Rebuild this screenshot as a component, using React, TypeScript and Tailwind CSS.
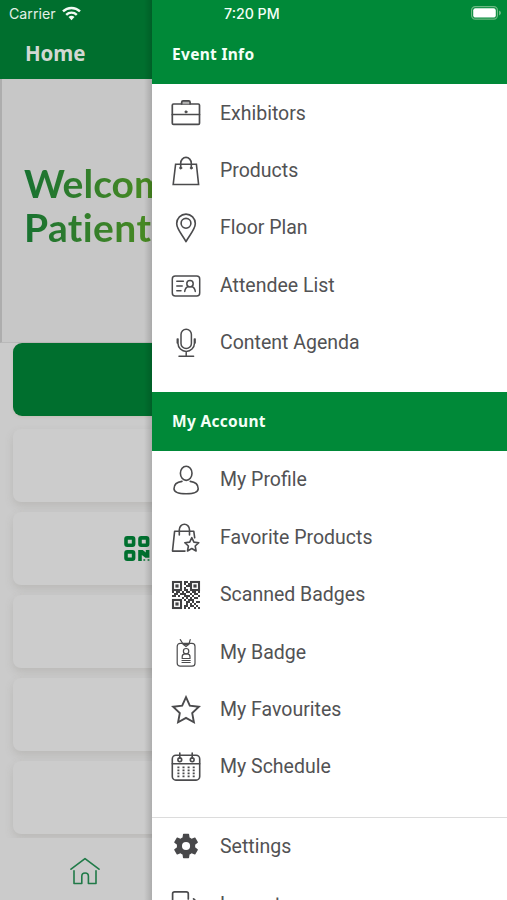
import { ReactNode } from "react";

interface MenuItemProps {
  icon: ReactNode;
  label: string;
}

interface IconProps {
  children: ReactNode;
  width?: number;
}

// Every drawer icon is drawn on a 30x30 grid
const Icon = ({ children, width = 1.6 }: IconProps) => (
  <svg
    width="30"
    height="30"
    viewBox="0 0 30 30"
    fill="none"
    stroke="#4b4b4d"
    strokeWidth={width}
    strokeLinecap="round"
    strokeLinejoin="round"
    className="shrink-0"
  >
    {children}
  </svg>
);

const BriefcaseIcon = () => (
  <Icon width={1.7}>
    <rect x="1.3" y="5" width="27.2" height="20.4" rx="1.2" />
    <path d="M1.3 15.5h27.2" />
    <path d="M10.7 4.8V3.2q0-1.4 1.4-1.4h5.6q1.4 0 1.4 1.4v1.6" fill="#b5b5b5" />
    <circle cx="15" cy="12.9" r="1.1" fill="#4b4b4d" strokeWidth="0.8" />
  </Icon>
);

const BagIcon = () => (
  <Icon>
    <path d="M4.6 8.2h20.8l2.2 20.3H2.2z" strokeLinejoin="miter" />
    <path d="M9.7 12V7.2a5.3 5.8 0 0 1 10.6 0V12" />
    <circle cx="9.7" cy="12" r="1.1" fill="#4b4b4d" strokeWidth="0.8" />
    <circle cx="20.3" cy="12" r="1.1" fill="#4b4b4d" strokeWidth="0.8" />
  </Icon>
);

const PinIcon = () => (
  <Icon>
    <path d="M15 28.7C12 22.5 5.7 16.5 5.7 10.5a9.3 9.4 0 0 1 18.6 0C24.3 16.5 18 22.5 15 28.7z" />
    <circle cx="15" cy="10.3" r="4.9" />
  </Icon>
);

const IdCardIcon = () => (
  <Icon width={1.5}>
    <rect x="1.3" y="4.9" width="27.4" height="20" rx="3" />
    <path d="M5.8 10.3h6.6M5.8 15h5.4M5.8 19.7h4.2" />
    <circle cx="19" cy="12.8" r="3.2" />
    <path d="M13.7 20.4c.4-3 2-4.6 3.8-5M24.3 20.4c-.4-3-2-4.6-3.8-5" />
  </Icon>
);

const MicIcon = () => (
  <Icon width={1.5}>
    <rect x="10" y="1.2" width="10.4" height="19.4" rx="5.2" />
    <path d="M7 11v4.4a8.2 8 0 0 0 16.4 0V11M6.3 11v4M24.1 11v4M15.2 23.4v4.9M8 28.3h14.6" />
  </Icon>
);

const ProfileIcon = () => (
  <Icon>
    <ellipse cx="15.2" cy="8.3" rx="5.8" ry="7.1" />
    <path d="M11 16.4C6 17 3 19.7 3 23.7c0 3.5 4.8 5 12.1 5s12.1-1.5 12.1-5c0-4-3-6.7-8-7.3" />
  </Icon>
);

const FavoriteProductsIcon = () => (
  <Icon>
    <path d="M14 28.1H1.5L3.6 8.3h19.2l.9 6.5" />
    <path d="M8.3 12V6.8a5.1 5.6 0 0 1 10.2 0V12" />
    <path
      d="m20.8 14.6 2.1 4.5 4.9.6-3.6 3.3.9 5-4.3-2.5-4.3 2.5.9-5-3.6-3.3 4.9-.6z"
      fill="#fff"
    />
  </Icon>
);

const QR_ROWS = [
  "00000011000000",
  "00000010100000",
  "00000001100000",
  "00000010000000",
  "00000011010000",
  "10110101101101",
  "01101110010110",
  "11010011101001",
  "00000101010110",
  "00000010111000",
  "00000001101011",
  "00000001010100",
  "00000011011010",
  "00000010100101",
];

const QrIcon = () => (
  <Icon width={2.1}>
    <g fill="#414143" stroke="none">
      {QR_ROWS.map((row, y) =>
        row.split("").map((cell, x) =>
          cell === "1" ? <rect key={`${x}-${y}`} x={1 + x * 2} y={1 + y * 2} width="2" height="2" /> : null
        )
      )}
    </g>
    {[[1, 1], [19, 1], [1, 19]].map(([x, y]) => (
      <g key={`${x}-${y}`} stroke="#414143" strokeLinejoin="miter">
        <rect x={x + 1} y={y + 1} width="8" height="8" />
        <rect x={x + 3.4} y={y + 3.4} width="3.2" height="3.2" fill="#414143" stroke="none" />
      </g>
    ))}
  </Icon>
);

const BadgeIcon = () => (
  <Icon width={1.2}>
    <rect x="6.2" y="5.4" width="17.8" height="22.8" rx="3" />
    <path d="M9.3 1.6 12 6l3 2.6L18 6l1.2-4.4M12.2 6.6h5.6" />
    <circle cx="15.1" cy="13.2" r="2.7" />
    <path d="M11.2 20.5v-1.8c0-1.5 1.4-2.6 2.6-2.8h2.6c1.4.2 2.6 1.3 2.6 2.8v1.8z" />
    <path d="M11 22.5h8.2M11 24.5h8.2" />
  </Icon>
);

const StarIcon = () => (
  <Icon width={1.9}>
    <path d="m15 2.2 3.8 8.4 9.1 1.1-6.7 6.4 1.7 9.2-7.9-4.4-7.9 4.4 1.7-9.2-6.7-6.4 9.1-1.1z" strokeLinejoin="miter" />
  </Icon>
);

const CalendarIcon = () => (
  <Icon>
    <rect x="1.3" y="3.3" width="27.4" height="24.8" rx="3.6" />
    <path d="M1.3 11.8h27.4M8.8 1v5.2M21.2 1v5.2" />
    <circle cx="8.8" cy="7.8" r="1.9" />
    <circle cx="21.2" cy="7.8" r="1.9" />
    {[15.4, 18.4, 21.4, 24.4].map((y) => (
      <path key={y} d={`M6.4 ${y}h17.5`} strokeLinecap="butt" strokeDasharray="2 3.1" strokeWidth="1.7" />
    ))}
  </Icon>
);

const SettingsIcon = () => (
  <Icon>
    <g transform="translate(-.2 -1.2) scale(1.27)" fill="#48484a" stroke="none">
      <path d="M19.14 12.94c.04-.3.06-.61.06-.94 0-.32-.02-.64-.07-.94l2.03-1.58a.49.49 0 0 0 .12-.61l-1.92-3.32a.49.49 0 0 0-.59-.22l-2.39.96c-.5-.38-1.03-.7-1.62-.94l-.36-2.54a.48.48 0 0 0-.48-.41h-3.84a.48.48 0 0 0-.47.41l-.36 2.54c-.59.24-1.13.57-1.62.94l-2.39-.96a.48.48 0 0 0-.59.22L2.74 8.87a.48.48 0 0 0 .12.61l2.03 1.58c-.05.3-.09.63-.09.94s.02.64.07.94l-2.03 1.58a.49.49 0 0 0-.12.61l1.92 3.32c.12.22.37.29.59.22l2.39-.96c.5.38 1.03.7 1.62.94l.36 2.54c.05.24.24.41.48.41h3.84c.24 0 .44-.17.47-.41l.36-2.54c.59-.24 1.13-.56 1.62-.94l2.39.96c.22.08.47 0 .59-.22l1.92-3.32a.48.48 0 0 0-.12-.61zM12 15.2a3.2 3.2 0 1 1 0-6.4 3.2 3.2 0 0 1 0 6.4z" />
    </g>
  </Icon>
);

const LogoutIcon = () => (
  <Icon width={1.7}>
    <path d="M17.3 9V3.8q0-2-2-2H3.6q-2 0-2 2v20q0 2 2 2h11.7q2 0 2-2V20" />
    <path d="m22.6 8.9 5.2 5-5.2 5M11 13.9h16.6" />
  </Icon>
);

const WifiIcon = () => (
  <svg width="19" height="15" viewBox="0 0 19 15" fill="none" stroke="#f2faf4" strokeWidth="2.4">
    <path d="M1 5.4a12.2 12.2 0 0 1 17 0" />
    <path d="M4.2 8.8a7.6 7.6 0 0 1 10.6 0" />
    <path d="m9.5 14.2-3-3.1a4.3 4.3 0 0 1 6 0z" fill="#f2faf4" stroke="none" />
  </svg>
);

const BatteryIcon = () => (
  <svg width="30" height="14" viewBox="0 0 30 14">
    <rect x=".6" y=".6" width="25.8" height="12.6" rx="3.6" fill="none" stroke="#6cb983" strokeWidth="1.2" />
    <rect x="2.2" y="2.2" width="22.6" height="9.4" rx="2.2" fill="#fff" />
    <path d="M28 4.6q2 .9 2 2.4t-2 2.4z" fill="#6cb983" />
  </svg>
);

const ScanIcon = () => (
  <svg width="27" height="26" viewBox="0 0 27 26" fill="none" stroke="#00702f" strokeWidth="3.6">
    <rect x="2" y="1.9" width="7.6" height="7.4" rx="1.2" />
    <rect x="16" y="1.9" width="7.6" height="7.4" rx="1.2" />
    <rect x="2" y="15.9" width="7.6" height="7.4" rx="1.2" />
    <path d="M14.2 25V14.1h4.6l3 2.4v-2.4h3.6v7.6h-4l-3.6-2.6V25z" fill="#00702f" stroke="none" />
    <path d="M19.4 23.2h1.8v1.6h-1.8zM23.6 23.2h1.8v1.6h-1.8z" fill="#00702f" stroke="none" />
  </svg>
);

const HomeIcon = () => (
  <svg width="30" height="28" viewBox="0 0 30 28" fill="none" stroke="#207a48" strokeWidth="1.6" strokeLinecap="round" strokeLinejoin="round">
    <path d="M1 12.2 15 1.6l14 10.6" />
    <path d="M4 13.8v12.7h7.8v-7.2a3.3 3.3 0 0 1 6.6 0v7.2H26V13.8" />
  </svg>
);

const MenuItem = ({ icon, label }: MenuItemProps) => (
  <li className="flex h-[57.4px] items-center gap-[19px] pl-[19px]">
    {icon}
    <span className="text-[19.5px] leading-6 text-[#525254]">{label}</span>
  </li>
);

const SectionTitle = ({ children }: { children: ReactNode }) => (
  <h2 className="font-['Noto_Sans',sans-serif] text-[15.5px] leading-5 font-bold tracking-[0.3px] text-[#f4fff7]">
    {children}
  </h2>
);

export default function App() {
  return (
    <div className="flex h-[900px] w-[507px] overflow-hidden bg-[#cbcbcb] font-['Roboto',sans-serif]">
      {/* Dimmed home screen */}
      <div className="relative flex h-full w-[152px] shrink-0 flex-col overflow-hidden">
        <header className="h-[79px] shrink-0 bg-[#006f2e]">
          <div className="flex h-[26px] items-center gap-[6px] pl-[9px] font-['Inter',sans-serif] text-[14.2px] text-[#e3f0e7]">
            <span className="pt-[2px]">Carrier</span>
            <WifiIcon />
          </div>
          <h1 className="pt-[12px] pl-[25px] font-['Noto_Sans',sans-serif] text-[20.5px] leading-[30px] font-bold tracking-[-0.1px] text-[#d2d8d3]">
            Home
          </h1>
        </header>

        <div className="h-[264px] shrink-0 border-b border-l-2 border-b-[#b9b9b9] border-l-[#adadad] bg-[#c7c7c7] pt-[82px] pl-[22px]">
          <p className="w-[300px] bg-linear-to-r from-[#177231] via-[#4b8c20] via-45% to-[#5b9820] bg-clip-text font-['Lato',sans-serif] text-[39px] leading-[44px] font-bold text-transparent">
            Welcome
            <br />
            <span className="tracking-[0.4px]">Patients</span>
          </p>
        </div>

        <div className="flex w-[480px] flex-col gap-[10px] pl-[13px]">
          <div className="mb-[3px] h-[73px] rounded-[9px] bg-[#006f2e] shadow-[0_1px_3px_rgba(190,180,160,0.5)]" />
          <div className="h-[73px] rounded-[8px] bg-[#cccccc] shadow-[0_4px_8px_rgba(120,115,105,0.2)]" />
          <div className="flex h-[73px] items-center rounded-[8px] bg-[#cccccc] pl-[111px] shadow-[0_4px_8px_rgba(120,115,105,0.2)]">
            <ScanIcon />
          </div>
          <div className="h-[73px] rounded-[8px] bg-[#cccccc] shadow-[0_4px_8px_rgba(120,115,105,0.2)]" />
          <div className="h-[73px] rounded-[8px] bg-[#cccccc] shadow-[0_4px_8px_rgba(120,115,105,0.2)]" />
          <div className="h-[73px] rounded-[8px] bg-[#cccccc] shadow-[0_4px_8px_rgba(120,115,105,0.2)]" />
        </div>

        {/* Bottom tab bar */}
        <nav className="mt-[4px] flex-1 bg-[#cbcbcb] pt-[19px] pl-[70px]">
          <HomeIcon />
        </nav>

        {/* Shadow cast by the drawer */}
        <div className="absolute inset-y-0 right-0 w-[8px] bg-linear-to-r from-black/0 to-black/15" />
      </div>

      {/* Drawer */}
      <aside className="flex h-full flex-1 flex-col bg-white">
        <div className="h-[84px] shrink-0 bg-[#008938]">
          <div className="flex h-[26px] items-center justify-between pr-[6px] pl-[72px] font-['Inter',sans-serif] text-[14.2px] font-medium text-[#f4fff7]">
            <span className="pt-[2px]">7:20 PM</span>
            <BatteryIcon />
          </div>
          <div className="pt-[18px] pl-[20px]">
            <SectionTitle>Event Info</SectionTitle>
          </div>
        </div>
        <ul className="h-[308px] shrink-0 pt-px">
          <MenuItem icon={<BriefcaseIcon />} label="Exhibitors" />
          <MenuItem icon={<BagIcon />} label="Products" />
          <MenuItem icon={<PinIcon />} label="Floor Plan" />
          <MenuItem icon={<IdCardIcon />} label="Attendee List" />
          <MenuItem icon={<MicIcon />} label="Content Agenda" />
        </ul>

        <div className="flex h-[58.5px] shrink-0 items-center bg-[#008938] pl-[20px]">
          <SectionTitle>My Account</SectionTitle>
        </div>
        <ul className="h-[366.5px] shrink-0 pt-[1.2px]">
          <MenuItem icon={<ProfileIcon />} label="My Profile" />
          <MenuItem icon={<FavoriteProductsIcon />} label="Favorite Products" />
          <MenuItem icon={<QrIcon />} label="Scanned Badges" />
          <MenuItem icon={<BadgeIcon />} label="My Badge" />
          <MenuItem icon={<StarIcon />} label="My Favourites" />
          <MenuItem icon={<CalendarIcon />} label="My Schedule" />
        </ul>

        <ul className="flex flex-col gap-px border-t border-[#dcdcdc] pt-[0.4px]">
          <MenuItem icon={<SettingsIcon />} label="Settings" />
          <MenuItem icon={<LogoutIcon />} label="Logout" />
        </ul>
      </aside>
    </div>
  );
}
